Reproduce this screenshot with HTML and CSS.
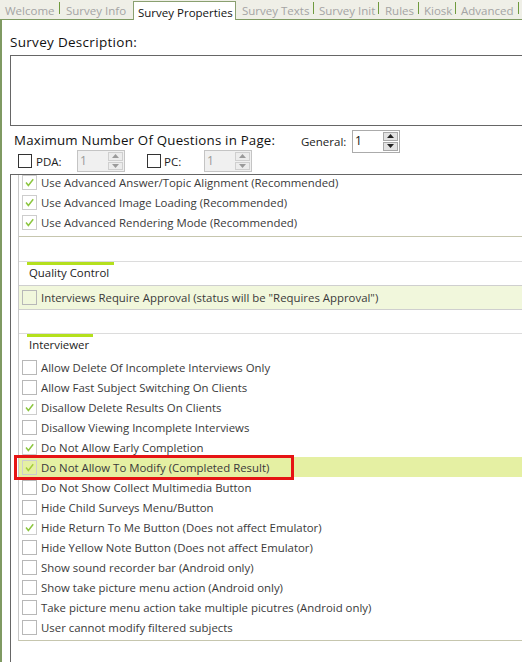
FILE: index.html
```html
<!DOCTYPE html>
<html>
<head>
<meta charset="utf-8">
<link rel="stylesheet" href="styles.css">
</head>
<body>
<div class="tabs">
  <div class="tab t-welcome">Welcome</div>
  <div class="tab t-info">Survey Info</div>
  <div class="tab active">Survey Properties</div>
  <div class="tab t-texts">Survey Texts</div>
  <div class="tab t-init">Survey Init</div>
  <div class="tab t-rules">Rules</div>
  <div class="tab t-kiosk">Kiosk</div>
  <div class="tab t-adv">Advanced</div>
</div>
<div class="panel">
  <div class="desc-label">Survey Description:</div>
  <div class="desc-box"></div>
  <div class="max-row">
    <div class="max-label">Maximum Number Of Questions in Page:</div>
    <div class="gen-label">General:</div>
    <div class="spin">
      <span class="spin-val">1</span>
      <span class="spin-btns">
        <span class="sbtn"><svg width="7" height="4" viewBox="0 0 7 4"><path d="M0 4 L3.5 0 L7 4 Z" fill="#222"/></svg></span>
        <span class="sbtn"><svg width="7" height="4" viewBox="0 0 7 4"><path d="M0 0 L3.5 4 L7 0 Z" fill="#222"/></svg></span>
      </span>
    </div>
  </div>
  <div class="dev-row">
    <span class="cb small"></span><span class="dev-label pda">PDA:</span>
    <div class="spin disabled">
      <span class="spin-val">1</span>
      <span class="spin-btns">
        <span class="sbtn"><svg width="7" height="4" viewBox="0 0 7 4"><path d="M0 4 L3.5 0 L7 4 Z" fill="#9a9a9a"/></svg></span>
        <span class="sbtn"><svg width="7" height="4" viewBox="0 0 7 4"><path d="M0 0 L3.5 4 L7 0 Z" fill="#9a9a9a"/></svg></span>
      </span>
    </div>
    <span class="cb small pc-cb"></span><span class="dev-label pc">PC:</span>
    <div class="spin disabled">
      <span class="spin-val">1</span>
      <span class="spin-btns">
        <span class="sbtn"><svg width="7" height="4" viewBox="0 0 7 4"><path d="M0 4 L3.5 0 L7 4 Z" fill="#9a9a9a"/></svg></span>
        <span class="sbtn"><svg width="7" height="4" viewBox="0 0 7 4"><path d="M0 0 L3.5 4 L7 0 Z" fill="#9a9a9a"/></svg></span>
      </span>
    </div>
  </div>
  <div class="list">
    <div class="inner">
      <div class="group g-first">
        <div class="item"><span class="cb on"><svg viewBox="0 0 15 15"><path d="M3.5 7.5 L6.2 11 L11.8 3.8" fill="none" stroke="#8cc640" stroke-width="1.7"/></svg></span><span class="lbl">Use Advanced Answer/Topic Alignment (Recommended)</span></div>
        <div class="item"><span class="cb on"><svg viewBox="0 0 15 15"><path d="M3.5 7.5 L6.2 11 L11.8 3.8" fill="none" stroke="#8cc640" stroke-width="1.7"/></svg></span><span class="lbl">Use Advanced Image Loading (Recommended)</span></div>
        <div class="item"><span class="cb on"><svg viewBox="0 0 15 15"><path d="M3.5 7.5 L6.2 11 L11.8 3.8" fill="none" stroke="#8cc640" stroke-width="1.7"/></svg></span><span class="lbl">Use Advanced Rendering Mode (Recommended)</span></div>
      </div>

      <div class="section-head">
        <div class="bar bar-qc"></div>
        <div class="section-title">Quality Control</div>
      </div>
      <div class="group g-qc">
        <div class="item hl-row"><span class="cb"></span><span class="lbl">Interviews Require Approval (status will be "Requires Approval")</span></div>
      </div>

      <div class="section-head head-int">
        <div class="bar bar-int"></div>
        <div class="section-title">Interviewer</div>
      </div>
      <div class="group g-int">
        <div class="item"><span class="cb"></span><span class="lbl">Allow Delete Of Incomplete Interviews Only</span></div>
        <div class="item"><span class="cb"></span><span class="lbl">Allow Fast Subject Switching On Clients</span></div>
        <div class="item"><span class="cb on"><svg viewBox="0 0 15 15"><path d="M3.5 7.5 L6.2 11 L11.8 3.8" fill="none" stroke="#8cc640" stroke-width="1.7"/></svg></span><span class="lbl">Disallow Delete Results On Clients</span></div>
        <div class="item"><span class="cb"></span><span class="lbl">Disallow Viewing Incomplete Interviews</span></div>
        <div class="item"><span class="cb on"><svg viewBox="0 0 15 15"><path d="M3.5 7.5 L6.2 11 L11.8 3.8" fill="none" stroke="#8cc640" stroke-width="1.7"/></svg></span><span class="lbl">Do Not Allow Early Completion</span></div>
        <div class="item selected"><span class="cb on"><svg viewBox="0 0 15 15"><path d="M3.5 7.5 L6.2 11 L11.8 3.8" fill="none" stroke="#a6cf3a" stroke-width="1.7"/></svg></span><span class="lbl">Do Not Allow To Modify (Completed Result)</span><span class="redbox"></span></div>
        <div class="item"><span class="cb"></span><span class="lbl">Do Not Show Collect Multimedia Button</span></div>
        <div class="item"><span class="cb"></span><span class="lbl">Hide Child Surveys Menu/Button</span></div>
        <div class="item"><span class="cb on"><svg viewBox="0 0 15 15"><path d="M3.5 7.5 L6.2 11 L11.8 3.8" fill="none" stroke="#8cc640" stroke-width="1.7"/></svg></span><span class="lbl">Hide Return To Me Button (Does not affect Emulator)</span></div>
        <div class="item"><span class="cb"></span><span class="lbl">Hide Yellow Note Button (Does not affect Emulator)</span></div>
        <div class="item"><span class="cb"></span><span class="lbl">Show sound recorder bar (Android only)</span></div>
        <div class="item"><span class="cb"></span><span class="lbl">Show take picture menu action (Android only)</span></div>
        <div class="item"><span class="cb"></span><span class="lbl">Take picture menu action take multiple picutres (Android only)</span></div>
        <div class="item"><span class="cb"></span><span class="lbl">User cannot modify filtered subjects</span></div>
      </div>
    </div>
  </div>
</div>
</body>
</html>
```

FILE: styles.css
```css
* { box-sizing: border-box; }
html, body {
  margin: 0;
  padding: 0;
  background: #ffffff;
  width: 522px;
  height: 662px;
  overflow: hidden;
  font-family: "Open Sans", "Noto Sans", sans-serif;
  font-size: 11.4px;
  color: #333333;
}

/* ---------- tabs ---------- */
.tabs {
  height: 20px;
  background: #efefe7;
  border-bottom: 1px solid #7f9a62;
  display: flex;
  align-items: stretch;
  padding-left: 0;
  white-space: nowrap;
}
.tab {
  color: #a4a4a4;
  font-size: 11.5px;
  line-height: 19px;
  padding: 2px 0 0 0;
  position: relative;
}
.t-welcome { padding-left: 5px; width: 60px; border-right: 1px solid #6f9a3e; margin: 2px 0 5px; line-height: 14px; padding-top: 2px; }
.t-info { padding-left: 6px; width: 73px; margin: 2px 0 5px; line-height: 14px; padding-top: 2px; }
.tab.active {
  color: #111111;
  background: #ffffff;
  border: 1px solid #8aa070;
  border-bottom: none;
  margin-top: 1px;
  margin-bottom: -1px;
  padding-left: 4px;
  width: 103px;
  line-height: 17px;
}
.t-texts { padding-left: 6px; width: 78px; border-right: 1px solid #6f9a3e; margin: 2px 0 5px; line-height: 14px; padding-top: 2px; }
.t-init { padding-left: 5px; width: 65px; border-right: 1px solid #6f9a3e; margin: 2px 0 5px; line-height: 14px; padding-top: 2px; }
.t-rules { padding-left: 6px; width: 40px; border-right: 1px solid #6f9a3e; margin: 2px 0 5px; line-height: 14px; padding-top: 2px; }
.t-kiosk { padding-left: 5px; width: 37px; border-right: 1px solid #6f9a3e; margin: 2px 0 5px; line-height: 14px; padding-top: 2px; }
.t-adv { padding-left: 5px; width: 63px; border-right: 1px solid #6f9a3e; margin: 2px 0 5px; line-height: 14px; padding-top: 2px; }

/* ---------- panel ---------- */
.panel {
  border-left: 2px solid #7f9a62;
  padding-left: 8px;
  height: 642px;
  overflow: hidden;
}
.desc-label {
  margin-top: 13px;
  font-size: 13.5px;
  line-height: 18px;
  color: #111111;
  letter-spacing: 0.3px;
}
.desc-box {
  margin-top: 4px;
  height: 71px;
  border: 1px solid #666666;
  margin-right: -6px;
  background: #ffffff;
}
.max-row {
  display: flex;
  align-items: center;
  height: 24px;
  margin-top: 3px;
}
.max-label {
  font-size: 13.3px;
  color: #111111;
  padding-left: 4px;
  width: 291px;
  letter-spacing: 0.2px;
  margin-top: -3px;
}
.gen-label {
  font-size: 11.5px;
  color: #222222;
  width: 51px;
}
.spin {
  width: 48px;
  height: 23px;
  border: 1px solid #ababab;
  background: #ffffff;
  display: flex;
  justify-content: space-between;
  padding: 1px 1px 1px 2px;
}
.spin-val {
  font-size: 12px;
  line-height: 18px;
  color: #111111;
}
.spin-btns {
  display: flex;
  flex-direction: column;
  gap: 1px;
  width: 15px;
}
.sbtn {
  flex: 1;
  background: #e2e2e2;
  border: 1px solid #a8a8a8;
  display: flex;
  align-items: center;
  justify-content: center;
}
.spin.disabled {
  background: #f0f0f0;
  border-color: #c4c4c4;
  height: 22px;
}
.spin.disabled .spin-val { color: #9a9a9a; }
.spin.disabled .sbtn { background: #ececec; border-color: #cfcfcf; }

.dev-row {
  display: flex;
  align-items: center;
  height: 22px;
  margin-top: -3px;
  padding-left: 8px;
}
.cb {
  display: inline-flex;
  width: 15px;
  height: 15px;
  border: 1px solid #b8b8b8;
  background: transparent;
  flex: none;
}
.cb svg { width: 13px; height: 13px; }
.cb.on { border-color: #cdcdcd; }
.cb.small {
  width: 14px;
  height: 14px;
  border-color: #333333;
  background: #ffffff;
}
.dev-label {
  font-size: 11.5px;
  color: #222222;
}
.pda { margin-left: 4px; width: 41px; }
.pc-cb { margin-left: 22px; }
.pc { margin-left: 3px; width: 40px; }

/* ---------- list ---------- */
.list {
  margin-top: 2px;
  border-top: 1px solid #666666;
  border-left: 1px solid #666666;
  margin-right: -6px;
  padding-left: 7px;
  height: 500px;
  overflow: hidden;
}
.inner {
  border-left: 1px solid #c8c8c8;
  border-bottom: 1px solid #c6c6ae;
  margin-top: -3px;
}
.group {
  border-bottom: 1px solid #c6c6ae;
}
.g-first {
  padding-bottom: 4px;
}
.item {
  height: 20px;
  display: flex;
  align-items: center;
  padding-left: 3px;
  position: relative;
}
.lbl {
  margin-left: 4px;
  white-space: nowrap;
  color: #3a3a3a;
}
.section-head {
  margin-top: 24px;
  border-top: 1px solid #dcdcdc;
}
.bar {
  height: 3px;
  background: #b4e01e;
  margin-left: 8px;
}
.bar-qc { width: 87px; }
.bar-int { width: 66px; }
.section-title {
  line-height: 16px;
  padding-left: 10px;
  padding-bottom: 4px;
  color: #222222;
}
.g-qc {
  border-bottom: none;
  padding-bottom: 23px;
}
.hl-row {
  height: 25px;
  background: #f1f7dc;
  border-top: 1px solid #cfcfcf;
  border-bottom: 1px solid #cfcfcf;
}
.head-int { margin-top: 0; }
.g-int {
  border-bottom: none;
  padding-bottom: 3px;
}
.item.selected {
  background: #e5f0a3;
}
.redbox {
  position: absolute;
  left: -5px;
  top: -2px;
  width: 280px;
  height: 25px;
  border: 3px solid #e61414;
}
```
